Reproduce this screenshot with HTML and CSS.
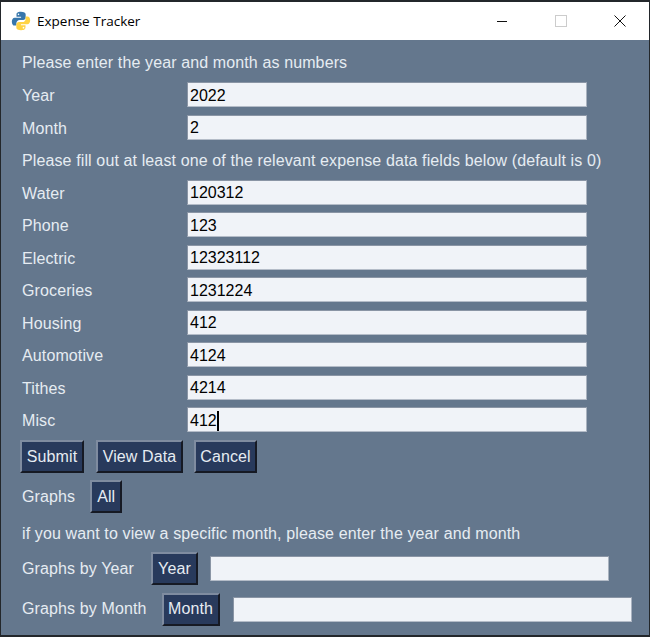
FILE: index.html
```html
<!DOCTYPE html>
<html lang="en">
<head>
    <meta charset="UTF-8">
    <title>Expense Tracker</title>
    <link rel="stylesheet" href="styles.css">
</head>
<body>
    <div class="window">
        <div class="titlebar">
            <svg class="app-icon" viewBox="0 0 24 24" width="20" height="20">
                <path fill="#3776ab" d="M11.8 1C7.5 1 6.6 2.700 6.600 4.500V7h5.500v1H4.400C2.200 8 1 10 1 12.800 1 15.600 2.300 17.500 4.300 17.500H6.500v-3c0-2.200 1.800-3.800 3.800-3.800h4.300c1.700 0 3-1.300 3-3V4.300C17.600 2.300 15.600 1 11.800 1Z"/>
                <path fill="#ffd343" d="M12.200 23c4.300 0 5.200-1.700 5.200-3.500V17h-5.500v-1h7.700c2.200 0 3.400-2 3.400-4.800 0-2.800-1.300-4.700-3.300-4.700H17.500v3c0 2.200-1.800 3.800-3.800 3.800H9.400c-1.700 0-3 1.300-3 3v3.400C6.400 21.700 8.400 23 12.200 23Z"/>
                <circle cx="9" cy="4" r="1" fill="#fff"/>
                <circle cx="15" cy="20" r="1" fill="#fff"/>
            </svg>
            <span class="title-text">Expense Tracker</span>
            <div class="window-controls">
                <span class="win-btn"><span class="win-min"></span></span>
                <span class="win-btn"><span class="win-max"></span></span>
                <span class="win-btn">
                    <svg viewBox="0 0 12 12" width="12" height="12"><path d="M0.500 0.500L11.500 11.500M11.500 0.500L0.500 11.500" stroke="#111" stroke-width="1" fill="none"/></svg>
                </span>
            </div>
        </div>

        <div class="content">
            <p class="note note-first">Please enter the year and month as numbers</p>
            <div class="field"><label>Year</label><div class="input">2022</div></div>
            <div class="field"><label>Month</label><div class="input">2</div></div>
            <p class="note">Please fill out at least one of the relevant expense data fields below (default is 0)</p>
            <div class="field"><label>Water</label><div class="input">120312</div></div>
            <div class="field"><label>Phone</label><div class="input">123</div></div>
            <div class="field"><label>Electric</label><div class="input">12323112</div></div>
            <div class="field"><label>Groceries</label><div class="input">1231224</div></div>
            <div class="field"><label>Housing</label><div class="input">412</div></div>
            <div class="field"><label>Automotive</label><div class="input">4124</div></div>
            <div class="field"><label>Tithes</label><div class="input">4214</div></div>
            <div class="field"><label>Misc</label><div class="input">412<span class="caret"></span></div></div>

            <div class="button-row">
                <button class="btn btn-submit">Submit</button>
                <button class="btn btn-view">View Data</button>
                <button class="btn btn-cancel">Cancel</button>
            </div>
            <div class="graph-row graph-all">
                <span>Graphs</span>
                <button class="btn btn-all">All</button>
            </div>
            <p class="note note-graphs">if you want to view a specific month, please enter the year and month</p>
            <div class="graph-row graph-year">
                <span>Graphs by Year</span>
                <button class="btn btn-year">Year</button>
                <div class="input input-year"></div>
            </div>
            <div class="graph-row graph-month">
                <span>Graphs by Month</span>
                <button class="btn btn-month">Month</button>
                <div class="input input-month"></div>
            </div>
        </div>
    </div>
</body>
</html>
```

FILE: styles.css
```css
* {
    margin: 0;
    padding: 0;
    box-sizing: border-box;
}

html, body {
    height: 100%;
}

body {
    background: #23272b;
    font-family: 'Liberation Sans', Arial, sans-serif;
    overflow: hidden;
    padding: 2px 1px 2px 1px;
}

.window {
    height: 633px;
    display: flex;
    flex-direction: column;
    background: #64778d;
}

/* Title bar */
.titlebar {
    height: 38px;
    background: #fff;
    display: flex;
    align-items: center;
    padding-left: 10px;
    color: #000;
}

.app-icon {
    margin-right: 6px;
}

.title-text {
    font-family: 'Open Sans', sans-serif;
    font-size: 13.500px;
    line-height: 36px;
}

.window-controls {
    margin-left: auto;
    display: flex;
}

.win-btn {
    width: 59px;
    height: 38px;
    display: flex;
    align-items: center;
    justify-content: center;
}

.win-min {
    width: 10px;
    height: 1px;
    background: #111;
}

.win-max {
    width: 12px;
    height: 12px;
    border: 1px solid #ccc;
}

/* Form */
.content {
    padding: 0 17px 0 19px;
    color: #e6ecf2;
    font-size: 16px;
    letter-spacing: 0.120px;
}

.note {
    height: 32.500px;
    line-height: 32.500px;
    padding-left: 2px;
}

.note-first {
    height: 40px;
    line-height: 45px;
}

.field {
    height: 32.500px;
    display: flex;
    align-items: center;
    padding-left: 2px;
}

.field label {
    width: 165px;
}

.input {
    width: 400px;
    height: 25px;
    background: #f0f3f8;
    color: #000;
    letter-spacing: 0;
    line-height: 24px;
    padding: 2px 0 0 2px;
    border: 1px solid;
    border-color: #8a95a5 #a9b2bf #b4bcc8 #8a95a5;
    display: flex;
    align-items: center;
}

.field .input {
    margin-bottom: 3px;
}

.caret {
    width: 2px;
    height: 20px;
    background: #000;
}

.btn {
    font: inherit;
    letter-spacing: inherit;
    color: #e6ecf2;
    background: #283a5c;
    height: 33px;
    border: 2px solid;
    border-color: #7f8ca0 #161a24 #161a24 #7f8ca0;
    text-align: center;
}

.button-row {
    display: flex;
    height: 38px;
    align-items: center;
}

.btn-submit {
    width: 64px;
}

.btn-view {
    width: 87px;
    margin-left: 12px;
}

.btn-cancel {
    width: 63px;
    margin-left: 11px;
}

.graph-row {
    display: flex;
    align-items: center;
    padding-left: 2px;
    white-space: nowrap;
}

.graph-all {
    height: 42px;
}

.btn-all {
    width: 32px;
    margin-left: 15px;
}

.note-graphs {
    height: 31px;
    line-height: 32px;
}

.graph-year {
    height: 40px;
}

.btn-year {
    width: 47px;
    margin-left: 17px;
}

.input-year {
    margin-left: 12px;
    flex: none;
    width: 399px;
}

.graph-month {
    height: 41px;
}

.btn-month {
    width: 58px;
    margin-left: 15px;
}

.input-month {
    margin-left: 13px;
    flex: none;
    width: 399px;
}
```
